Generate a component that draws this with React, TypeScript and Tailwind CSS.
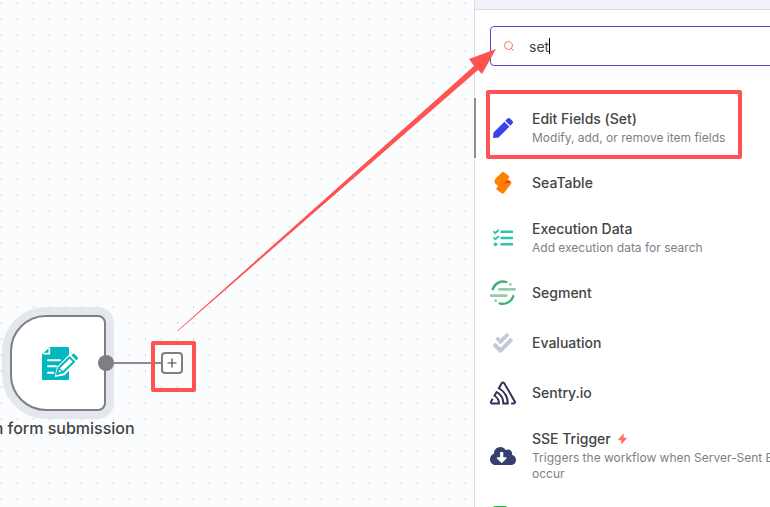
import type { ReactNode } from "react";
import { Plus, Search } from "lucide-react";
import { FaCheckDouble, FaCloudDownloadAlt, FaPen, FaTasks } from "react-icons/fa";
import { SiSentry } from "react-icons/si";

interface NodeItem {
  id: number;
  title: string;
  description?: string;
  icon: ReactNode;
  trigger?: boolean;
  active?: boolean;
}

const FormIcon = () => (
  <svg viewBox="0 0 108 105" className="ml-1 w-9 h-[35px]" aria-hidden="true">
    <path d="M24 3H77a4 4 0 0 1 4 4V98a4 4 0 0 1-4 4H4a4 4 0 0 1-4-4V25z" fill="#00b8bd" />
    <path d="M22 6V23H4" fill="none" stroke="#fff" strokeWidth="5" />
    <path d="M18 43H54M18 61H42M18 80H34" stroke="#fff" strokeWidth="6" strokeLinecap="round" />
    <path d="M38 93L45 62L87 20L112 42L68 88Z" fill="#fff" />
    <path
      d="M45 84L50 66L83 34L96 47L63 79Z"
      fill="#fff"
      stroke="#00b8bd"
      strokeWidth="6"
      strokeLinejoin="round"
    />
    <path d="M51 67L62 78" stroke="#00b8bd" strokeWidth="4" />
    <path d="M91 28L95 25L106 36L103 40Z" fill="#00b8bd" stroke="#00b8bd" strokeWidth="4" strokeLinejoin="round" />
  </svg>
);

const SeaTableIcon = () => (
  <svg viewBox="0 0 60 72" className="w-5 h-6" aria-hidden="true">
    <path d="M13 48L38 26L52 31Q57 34 54 39L33 66Q30 70 26 67L12 57Q8 53 13 48Z" fill="#ff8000" />
    <path d="M32 38L44 25L53 32Q51 36 43 36Z" fill="#f5392d" />
    <path d="M6 25L27 4Q30 1 33 4L47 14Q51 18 47 22L23 46Q20 49 16 46L6 37Q1 32 6 25Z" fill="#ff8000" />
  </svg>
);

const SegmentIcon = () => (
  <svg viewBox="0 0 78 78" className="size-[26px]" fill="none" strokeLinecap="round" aria-hidden="true">
    <path d="M28 28H74M3 47H49" stroke="#93cda6" strokeWidth="8" />
    <path d="M8 28A33 33 0 0 1 49 6M70 48A33 33 0 0 1 29 70" stroke="#43af79" strokeWidth="7" />
    <circle cx="61" cy="13" r="4" fill="#93cda6" />
    <circle cx="17" cy="62" r="4" fill="#93cda6" />
  </svg>
);

const SheetIcon = () => (
  <svg viewBox="0 0 20 26" className="w-5 h-[26px]" aria-hidden="true">
    <path d="M2 0H13L20 7V24a2 2 0 0 1-2 2H2a2 2 0 0 1-2-2V2a2 2 0 0 1 2-2Z" fill="#28b446" />
    <path d="M4 13H16V21H4ZM4 17H16M10 13V21" fill="none" stroke="#fff" strokeWidth="1" />
  </svg>
);

const BoltIcon = () => (
  <svg viewBox="0 0 27 31" className="w-[9px] h-[10px]" aria-hidden="true">
    <path d="M16 1L1 18H12L10 30L26 13H15Z" fill="#ff6f5c" stroke="#ff6f5c" strokeWidth="3" strokeLinejoin="round" />
  </svg>
);

const items: NodeItem[] = [
  {
    id: 1,
    title: "Edit Fields (Set)",
    description: "Modify, add, or remove item fields",
    icon: <FaPen className="size-5 text-[#3a42e9]" />,
    active: true,
  },
  { id: 2, title: "SeaTable", icon: <SeaTableIcon /> },
  {
    id: 3,
    title: "Execution Data",
    description: "Add execution data for search",
    icon: <FaTasks className="size-5 text-[#31c4ab]" />,
  },
  { id: 4, title: "Segment", icon: <SegmentIcon /> },
  { id: 5, title: "Evaluation", icon: <FaCheckDouble className="size-5 text-[#c3c9d5]" /> },
  { id: 6, title: "Sentry.io", icon: <SiSentry className="size-[26px] text-[#362d59]" /> },
  {
    id: 7,
    title: "SSE Trigger",
    description: "Triggers the workflow when Server-Sent Events occur",
    icon: <FaCloudDownloadAlt className="size-[26px] text-[#35406e]" />,
    trigger: true,
  },
];

const NodeRow = ({ item }: { item: NodeItem }) => (
  <li>
    <button
      type="button"
      className={`w-full min-h-[50px] py-2.5 pl-3.5 pr-8 border-l-2 flex items-center gap-4 text-left ${
        item.active ? "border-[#8d8f94]" : "border-transparent"
      }`}
    >
      <span className="w-[26px] shrink-0 flex justify-center">{item.icon}</span>
      <span className={item.description ? "flex flex-col pb-0.5" : "flex flex-col"}>
        <span className="flex items-center gap-[7px] text-sm leading-[22px] font-medium text-[#444444]">
          {item.title}
          {item.trigger && <BoltIcon />}
        </span>
        {item.description && <span className="text-xs leading-4 text-[#7d7f85]">{item.description}</span>}
      </span>
    </button>
  </li>
);

const Canvas = () => (
  <main className="relative flex-1 min-w-[474px] overflow-hidden bg-[#fbfcfe]">
    <svg className="absolute inset-0 size-full" aria-hidden="true">
      <defs>
        <pattern id="dots" width="16" height="16" patternUnits="userSpaceOnUse">
          <rect x="1" y="2" width="1" height="2" fill="#d2d3d8" />
        </pattern>
      </defs>
      <rect width="100%" height="100%" fill="url(#dots)" />
    </svg>

    {/* Form node */}
    <div className="absolute left-2.5 top-[315px] flex flex-col items-center w-24">
      <div className="size-24 shrink-0 flex items-center justify-center bg-white border-2 border-[#7d7f85] rounded-l-[36px] rounded-r-lg ring-8 ring-[#e5e7ef]">
        <FormIcon />
      </div>
      <p className="mt-[5px] text-base leading-6 font-medium text-[#444444] whitespace-nowrap">On form submission</p>
    </div>

    {/* Output handle */}
    <div className="absolute left-[98px] top-[352px] flex items-center">
      <span className="size-4 rounded-full bg-[#7d7f85]" />
      <span className="w-[47px] h-0.5 bg-[#8b8d93]" />
      <button
        type="button"
        aria-label="Add node"
        className="size-[22px] flex items-center justify-center bg-white border-2 border-[#7d7f85] rounded text-[#444444]"
      >
        <Plus size={14} strokeWidth={2} />
      </button>
    </div>
    <div className="absolute left-[151px] top-[341px] w-[45px] h-[51px] border-4 border-[#ff5252] rounded-xs" />
  </main>
);

const NodePanel = () => (
  <aside className="relative w-96 shrink-0 bg-white border-l border-[#d9dbe6]">
    <div className="h-2.5 bg-[#f1f2f8] border-b border-[#d9dbe6]" />
    <label className="mt-4 mx-[15px] h-10 pl-3 flex items-center border border-[#5a49bd] rounded bg-white shadow-[0_4px_12px_rgba(0,0,0,0.03)]">
      <Search size={12} strokeWidth={2} className="text-[#ff6f5c]" />
      <input
        type="text"
        aria-label="Search nodes"
        defaultValue="set"
        className="ml-3.5 pt-px [field-sizing:content] text-sm text-[#444444] outline-none"
      />
      <span className="w-px h-4 bg-black" />
    </label>
    <ul className="mt-8 -ml-px">
      {items.map((item) => (
        <NodeRow key={item.id} item={item} />
      ))}
      <li className="h-[50px] pl-4 flex items-center">
        <span className="w-[26px] flex justify-center">
          <SheetIcon />
        </span>
      </li>
    </ul>
    <div className="absolute left-[11px] top-[90px] w-64 h-[69px] border-4 border-[#ff5252] rounded-xs" />
  </aside>
);

export default function App() {
  return (
    <div className="relative h-screen flex overflow-hidden font-['Inter',sans-serif]">
      <Canvas />
      <NodePanel />
      {/* Arrow from the plus button to the search box */}
      <svg width="500" height="340" className="absolute left-0 top-0 pointer-events-none" aria-hidden="true">
        <path d="M177 331L474 66L469 59L496 49L482 74L478 70L178 331Z" fill="#ff5252" />
      </svg>
    </div>
  );
}
